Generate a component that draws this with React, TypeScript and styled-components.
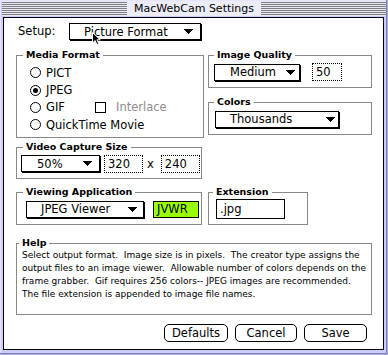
import React from 'react';
import styled, { createGlobalStyle } from 'styled-components';

const GlobalStyle = createGlobalStyle`
  html, body { margin: 0; padding: 0; background: #fff; }
  body { font-family: "DejaVu Sans", "Liberation Sans", sans-serif; color: #000; }
`;

const Window = styled.div`
  position: relative;
  box-sizing: border-box;
  width: 388px;
  height: 355px;
  display: flex;
  flex-direction: column;
  padding: 0 2px 5px 2px;
  background: #ccccff;
  box-shadow: inset -1px -1px 0 #aaaadd, inset -2px -2px 0 #8080b8, inset 1px 1px 0 #e4e4ff;
`;

const TitleBar = styled.div`
  height: 17px;
  box-sizing: border-box;
  padding: 1px 0;
  display: flex;
`;

const Stripes = styled.div`
  flex: 1;
  display: flex;
  justify-content: center;
  background: repeating-linear-gradient(to bottom, #e8e8f4 0 1px, #808080 1px 2px);
`;

const Title = styled.span`
  padding: 0 7px;
  background: #ececf6;
  font-size: 11px;
  line-height: 15px;
`;

const Content = styled.div`
  position: relative;
  flex: 1;
  margin: 0 2px 0 1px;
  border: 1px solid #000;
  background: #fff;
  display: flex;
  flex-direction: column;
  padding: 5px 11px 0 12px;
  font-size: 11.5px;
`;

const SetupRow = styled.div`
  display: flex;
  align-items: flex-start;
  height: 18px;
  padding-left: 2px;
`;

const SetupLabel = styled.span`
  width: 51px;
  line-height: 17px;
`;

const Popup = styled.div<{ $w: number; $pl: number; $pr?: number }>`
  box-sizing: border-box;
  width: ${p => p.$w}px;
  height: 17px;
  flex: none;
  border: 1px solid #000;
  box-shadow: 1px 1px 0 #000;
  background: #fff;
  display: flex;
  align-items: center;
  padding: 0 ${p => p.$pr ?? 6}px 0 ${p => p.$pl}px;
  white-space: nowrap;
  svg { margin-left: auto; }
`;

const Columns = styled.div`
  display: flex;
  gap: 4px;
  margin-top: 14px;
`;

const Column = styled.div`
  display: flex;
  flex-direction: column;
  align-items: flex-start;
`;

const Group = styled.div<{ $w: number; $h: number; $mt?: number }>`
  position: relative;
  box-sizing: border-box;
  width: ${p => p.$w}px;
  height: ${p => p.$h}px;
  margin-top: ${p => p.$mt ?? 0}px;
  border: 1px solid #888;
  flex: none;
`;

const Legend = styled.span<{ $left?: number }>`
  position: absolute;
  top: -7px;
  left: ${p => p.$left ?? 5}px;
  padding: 0 3px;
  background: #fff;
  font-weight: bold;
  font-size: 9.5px;
  line-height: 12px;
  white-space: nowrap;
`;

const Inline = styled.div<{ $pl: number; $gap?: number }>`
  height: 100%;
  box-sizing: border-box;
  display: flex;
  align-items: center;
  padding: 1px 0 0 ${p => p.$pl}px;
  gap: ${p => p.$gap ?? 0}px;
`;

const RadioList = styled.div`
  display: flex;
  flex-direction: column;
  padding: 8px 0 0 13px;
`;

const RadioRow = styled.div`
  height: 17.4px;
  display: flex;
  align-items: center;
  gap: 5px;
`;

const RadioCircle = styled.span<{ $on?: boolean }>`
  width: 11px;
  height: 11px;
  box-sizing: border-box;
  border: 1px solid #000;
  border-radius: 50%;
  display: flex;
  align-items: center;
  justify-content: center;
  &::after {
    content: '';
    width: 5px;
    height: 5px;
    border-radius: 50%;
    background: #000;
    display: ${p => (p.$on ? 'block' : 'none')};
  }
`;

const RadioText = styled.span<{ $w?: number }>`
  width: ${p => (p.$w ? `${p.$w}px` : 'auto')};
  white-space: nowrap;
`;

const CheckBox = styled.span`
  width: 11px;
  height: 11px;
  box-sizing: border-box;
  border: 1px solid #000;
  margin-right: 5px;
`;

const Dimmed = styled.span`
  color: #8c8c8c;
`;

const Field = styled.div<{ $w: number; $h?: number; $dotted?: boolean; $bg?: string; $ml?: number }>`
  box-sizing: border-box;
  width: ${p => p.$w}px;
  height: ${p => p.$h ?? 18}px;
  margin-left: ${p => p.$ml ?? 0}px;
  flex: none;
  border: 1px ${p => (p.$dotted ? 'dotted' : 'solid')} #000;
  background: ${p => p.$bg ?? '#fff'};
  display: flex;
  align-items: center;
  padding-left: 3px;
  white-space: nowrap;
`;

const Times = styled.span`
  margin: 0 7px 0 4px;
`;

const HelpText = styled.div`
  padding: 5px 0 0 5px;
  font-size: 9px;
  line-height: 13px;
  white-space: pre;
`;

const ButtonRow = styled.div`
  display: flex;
  justify-content: flex-end;
  gap: 7px;
  margin-top: 9px;
  padding-right: 5px;
`;

const Button = styled.button<{ $w: number }>`
  box-sizing: border-box;
  width: ${p => p.$w}px;
  height: 18px;
  padding: 0;
  border: 1px solid #000;
  border-radius: 5px;
  background: #fff;
  color: #000;
  font-family: inherit;
  font-size: 11.5px;
`;

const Cursor = styled.svg`
  position: absolute;
  left: 88px;
  top: 14px;
`;

const Triangle = () => (
  <svg width="9" height="5" viewBox="0 0 9 5" shapeRendering="crispEdges">
    <path d="M0 0h9v1h-1v1h-1v1h-1v1h-1v1h-1v-1h-1v-1h-1v-1h-1v-1h-1z" fill="#000" />
  </svg>
);

const Radio = ({ label, on, w }: { label: string; on?: boolean; w?: number }) => (
  <>
    <RadioCircle $on={on} />
    <RadioText $w={w}>{label}</RadioText>
  </>
);

const helpLines = [
  'Select output format.  Image size is in pixels.  The creator type assigns the',
  'output files to an image viewer.  Allowable number of colors depends on the',
  'frame grabber.  Gif requires 256 colors-- JPEG images are recommended.',
  'The file extension is appended to image file names.',
];

export default function App() {
  return (
    <>
      <GlobalStyle />
      <Window>
        <TitleBar>
          <Stripes>
            <Title>MacWebCam Settings</Title>
          </Stripes>
        </TitleBar>
        <Content>
          <SetupRow>
            <SetupLabel>Setup:</SetupLabel>
            <Popup $w={132} $pl={14} $pr={7}>
              Picture Format
              <Triangle />
            </Popup>
          </SetupRow>

          <Columns>
            <Column>
              <Group $w={188} $h={83}>
                <Legend $left={6}>Media Format</Legend>
                <RadioList>
                  <RadioRow>
                    <Radio label="PICT" />
                  </RadioRow>
                  <RadioRow>
                    <Radio label="JPEG" on />
                  </RadioRow>
                  <RadioRow>
                    <Radio label="GIF" w={44} />
                    <CheckBox />
                    <Dimmed>Interlace</Dimmed>
                  </RadioRow>
                  <RadioRow>
                    <Radio label="QuickTime Movie" />
                  </RadioRow>
                </RadioList>
              </Group>

              <Group $w={186} $h={32} $mt={9}>
                <Legend $left={6}>Video Capture Size</Legend>
                <Inline $pl={4}>
                  <Popup $w={79} $pl={15} $pr={7}>
                    50%
                    <Triangle />
                  </Popup>
                  <Field $w={39} $dotted $ml={4}>320</Field>
                  <Times>x</Times>
                  <Field $w={39} $dotted>240</Field>
                </Inline>
              </Group>

              <Group $w={186} $h={33} $mt={13}>
                <Legend $left={6}>Viewing Application</Legend>
                <Inline $pl={9} $gap={9}>
                  <Popup $w={118} $pl={14} $pr={6}>
                    JPEG Viewer
                    <Triangle />
                  </Popup>
                  <Field $w={46} $h={17} $bg="#99ff00">JVWR</Field>
                </Inline>
              </Group>
            </Column>

            <Column>
              <Group $w={164} $h={33}>
                <Legend>Image Quality</Legend>
                <Inline $pl={5} $gap={12}>
                  <Popup $w={86} $pl={15} $pr={4}>
                    Medium
                    <Triangle />
                  </Popup>
                  <Field $w={30} $dotted>50</Field>
                </Inline>
              </Group>

              <Group $w={164} $h={33} $mt={14}>
                <Legend>Colors</Legend>
                <Inline $pl={6}>
                  <Popup $w={124} $pl={14} $pr={3}>
                    Thousands
                    <Triangle />
                  </Popup>
                </Inline>
              </Group>

              <Group $w={100} $h={33} $mt={57}>
                <Legend $left={4}>Extension</Legend>
                <Inline $pl={7}>
                  <Field $w={69} $h={20}>.jpg</Field>
                </Inline>
              </Group>
            </Column>
          </Columns>

          <Group $w={356} $h={72} $mt={18}>
            <Legend $left={2}>Help</Legend>
            <HelpText>
              {helpLines.map(l => (
                <div key={l}>{l}</div>
              ))}
            </HelpText>
          </Group>

          <ButtonRow>
            <Button $w={64}>Defaults</Button>
            <Button $w={62}>Cancel</Button>
            <Button $w={63}>Save</Button>
          </ButtonRow>

          <Cursor width="10" height="14" viewBox="0 0 10 14">
            <path d="M0.5 0.5 L0.5 11 L3 8.5 L5 12.5 L6.8 11.7 L4.9 7.8 L8.3 7.8 Z" fill="#000" stroke="#fff" strokeWidth="1" />
          </Cursor>
        </Content>
      </Window>
    </>
  );
}
